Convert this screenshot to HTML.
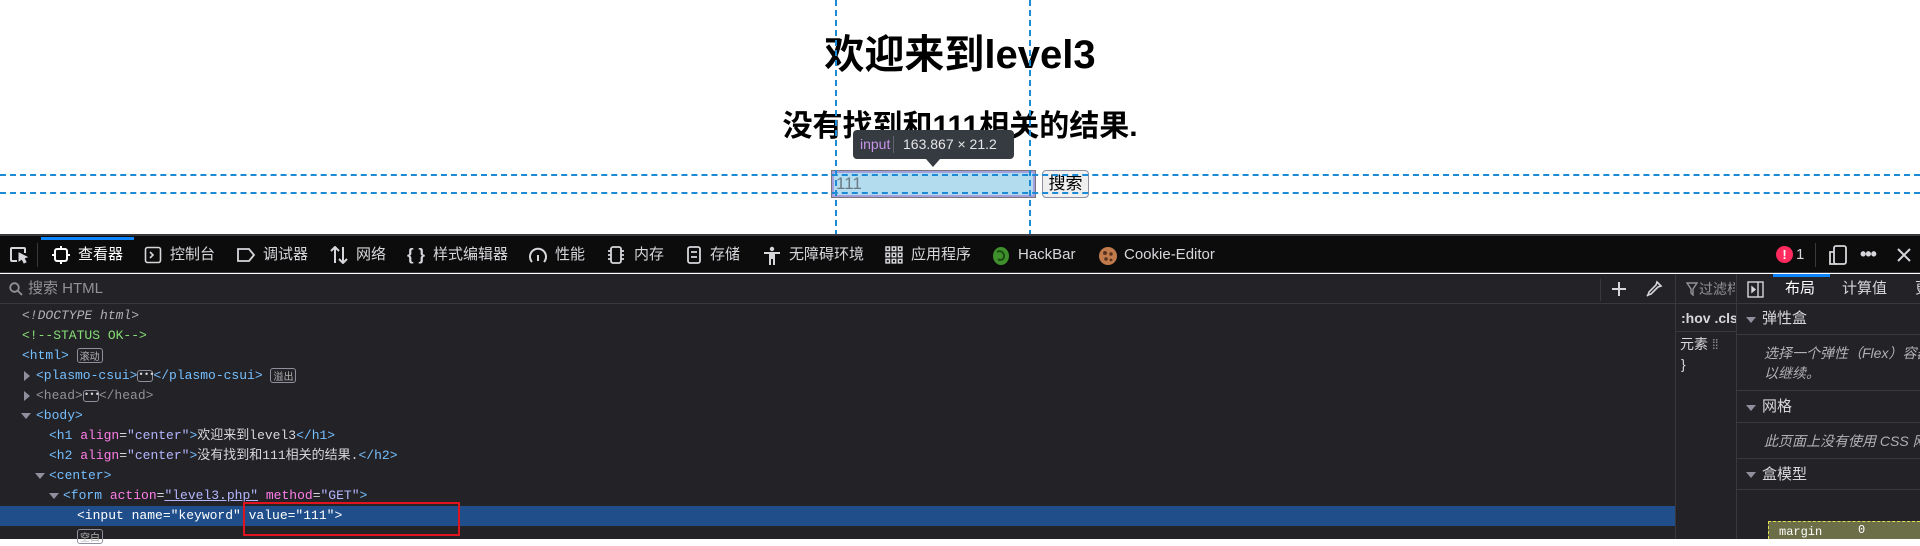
<!DOCTYPE html>
<html><head><meta charset="utf-8"><style>
*{margin:0;padding:0;box-sizing:border-box}
body{width:1920px;height:539px;overflow:hidden;background:#fff;position:relative;font-family:"Liberation Sans","Noto Sans CJK SC",sans-serif}
.a{position:absolute;white-space:nowrap}
.vd{position:absolute;top:0;height:236px;border-left:2px dashed #1d8ad6;width:0}
.hd{position:absolute;left:0;width:1920px;border-top:2px dashed #1d8ad6;height:0}
.tb{position:absolute;top:236px;left:0;width:1920px;height:37px;background:#0c0c0d;border-bottom:1px solid #38383d}
.ti{position:absolute;top:0;height:37px;line-height:37px;color:#d7d7db;font-size:15px;white-space:nowrap;width:200px}
.ti span{white-space:nowrap}
.ti svg{position:absolute;top:10px}
.mono{font-family:"Liberation Mono","Noto Sans CJK SC",monospace;font-size:13px}
.row{position:absolute;height:20px;line-height:20px;color:#75bfff;white-space:nowrap}
.an{color:#ff7de9}.av{color:#b4b6ff}.tx{color:#d7d7db}.g{color:#939395}
.badge{display:inline-block;border:1px solid #8f8f9d;border-radius:3px;color:#b1b1b3;font-size:10px;line-height:13px;padding:0 2px;vertical-align:middle;font-family:"Noto Sans CJK SC",sans-serif}
.dots{display:inline-block;width:16px;height:12px;border:1px solid #8f8f9d;border-radius:3px;vertical-align:middle;color:#d7d7db;font-size:9px;line-height:8px;text-align:center}
.arr{position:absolute;width:0;height:0;border-left:5px solid transparent;border-right:5px solid transparent;border-top:6px solid #8f8f9d}
.arrR{position:absolute;width:0;height:0;border-top:5px solid transparent;border-bottom:5px solid transparent;border-left:6px solid #8f8f9d}
.sec{position:absolute;left:1737px;width:183px;border-bottom:1px solid #38383d;color:#d7d7db;font-size:15px;white-space:nowrap;overflow:hidden}
.sec span{white-space:nowrap}
</style></head><body>
<div class="a" style="left:0;width:1920px;top:30px;height:50px;line-height:50px;text-align:center;font-size:40px;font-weight:bold;color:#000">欢迎来到level3</div>
<div class="a" style="left:0;width:1920px;top:107px;height:40px;line-height:40px;text-align:center;font-size:30px;font-weight:bold;color:#000">没有找到和111相关的结果.</div>
<div class="a" style="left:832px;top:171px;width:203px;height:26px;background:#b4dcef;border:2px solid #a79ee0;box-shadow:0 0 0 1px #777"></div>
<div class="a" style="left:836px;top:173px;font-size:17px;line-height:22px;color:#6b7a84">111</div>
<div class="a" style="left:1042px;top:170px;width:47px;height:28px;background:#efefef;border:1px solid #8f8f9d;border-radius:4px;font-size:17px;line-height:26px;text-align:center;color:#000">搜索</div>
<div class="vd" style="left:835px"></div><div class="vd" style="left:1029px"></div>
<div class="hd" style="top:174px"></div><div class="hd" style="top:192px"></div>
<div class="a" style="left:853px;top:130px;width:161px;height:29px;background:#363a41;border-radius:4px;font-size:14px;line-height:29px;color:#e6e6e6"><span style="position:absolute;left:7px;color:#c792ea">input</span><span style="position:absolute;left:40px;top:6px;height:17px;border-left:1px solid #60646b"></span><span style="position:absolute;left:50px">163.867 × 21.2</span></div>
<div class="a" style="left:926px;top:159px;width:0;height:0;border-left:7px solid transparent;border-right:7px solid transparent;border-top:8px solid #363a41"></div>

<div class="a" style="left:0;top:234px;width:1920px;height:2px;background:#38383d"></div>
<div class="tb">
 <div class="a" style="left:41px;top:1px;width:93px;height:3px;background:#0a84ff"></div>
 <svg class="a" style="left:9px;top:10px" width="20" height="18" viewBox="0 0 20 18" fill="none" stroke="#d7d7db" stroke-width="2"><path d="M8 15H3a1 1 0 0 1-1-1V3a1 1 0 0 1 1-1h12a1 1 0 0 1 1 1v4"/><path d="M10 7l8 4-3 1 2 4-2 1-2-4-3 2z" fill="#d7d7db" stroke-width="1"/></svg>
 <div class="a" style="left:37px;top:7px;height:24px;border-left:1px solid #38383d"></div>
 <div class="ti" style="left:52px"><svg width="18" height="18" viewBox="0 0 18 18" fill="none" stroke="#fff" stroke-width="2"><rect x="3" y="3" width="12" height="12" rx="2"/><path d="M9 0v3M9 15v3M0 9h3M15 9h3"/></svg><span style="position:absolute;left:26px;color:#fff">查看器</span></div>
 <div class="ti" style="left:144px"><svg width="18" height="18" viewBox="0 0 18 18" fill="none" stroke="#d7d7db" stroke-width="1.6"><rect x="1.5" y="1.5" width="15" height="15" rx="2"/><path d="M6 6l3 3-3 3"/></svg><span style="position:absolute;left:26px">控制台</span></div>
 <div class="ti" style="left:236px"><svg width="20" height="18" viewBox="0 0 20 18" fill="none" stroke="#d7d7db" stroke-width="1.8"><path d="M2 3h11l5 6-5 6H2z"/></svg><span style="position:absolute;left:27px">调试器</span></div>
 <div class="ti" style="left:329px"><svg width="20" height="18" viewBox="0 0 20 18" fill="none" stroke="#d7d7db" stroke-width="2"><path d="M6 17V1M2 5l4-4 4 4M14 1v16M10 13l4 4 4-4"/></svg><span style="position:absolute;left:27px">网络</span></div>
 <div class="ti" style="left:407px"><span style="position:absolute;left:0;font-size:17px;font-weight:bold">{ }</span><span style="position:absolute;left:26px">样式编辑器</span></div>
 <div class="ti" style="left:528px"><svg width="20" height="18" viewBox="0 0 20 18" fill="none" stroke="#d7d7db" stroke-width="2"><path d="M4 16A8 8 0 1 1 16 16"/><path d="M10 15V9"/></svg><span style="position:absolute;left:27px">性能</span></div>
 <div class="ti" style="left:606px"><svg width="20" height="18" viewBox="0 0 20 18" fill="none" stroke="#d7d7db" stroke-width="1.8"><rect x="5" y="1" width="10" height="16" rx="2"/><path d="M2 5h3M2 9h3M2 13h3M15 5h3M15 9h3M15 13h3"/></svg><span style="position:absolute;left:28px">内存</span></div>
 <div class="ti" style="left:686px"><svg width="16" height="18" viewBox="0 0 16 18" fill="none" stroke="#d7d7db" stroke-width="1.8"><rect x="2" y="1" width="12" height="16" rx="2"/><path d="M5 6h6M5 11h6"/></svg><span style="position:absolute;left:24px">存储</span></div>
 <div class="ti" style="left:762px"><svg width="20" height="20" viewBox="0 0 20 20" fill="#d7d7db"><circle cx="10" cy="3" r="2.2"/><path d="M2 6h16v2h-5v11h-2v-6H9v6H7V8H2z"/></svg><span style="position:absolute;left:27px">无障碍环境</span></div>
 <div class="ti" style="left:885px"><svg width="18" height="18" viewBox="0 0 18 18" fill="none" stroke="#d7d7db" stroke-width="1.5"><rect x="1" y="1" width="3.5" height="3.5"/><rect x="7.2" y="1" width="3.5" height="3.5"/><rect x="13.4" y="1" width="3.5" height="3.5"/><rect x="1" y="7.2" width="3.5" height="3.5"/><rect x="7.2" y="7.2" width="3.5" height="3.5"/><rect x="13.4" y="7.2" width="3.5" height="3.5"/><rect x="1" y="13.4" width="3.5" height="3.5"/><rect x="7.2" y="13.4" width="3.5" height="3.5"/><rect x="13.4" y="13.4" width="3.5" height="3.5"/></svg><span style="position:absolute;left:26px">应用程序</span></div>
 <div class="ti" style="left:991px"><svg width="20" height="20" viewBox="0 0 20 20"><ellipse cx="10" cy="10" rx="8" ry="9" fill="#3f8f2c"/><path d="M6 6c3-2 7 0 7 4s-4 5-6 3" stroke="#1d4d12" stroke-width="2" fill="none"/></svg><span style="position:absolute;left:27px">HackBar</span></div>
 <div class="ti" style="left:1098px"><svg width="20" height="20" viewBox="0 0 20 20"><circle cx="10" cy="10" r="9" fill="#c07a4c"/><circle cx="7" cy="7" r="2" fill="#5a3320"/><circle cx="13" cy="8" r="1.7" fill="#5a3320"/><circle cx="8" cy="13" r="1.8" fill="#5a3320"/><circle cx="13" cy="14" r="1.4" fill="#5a3320"/></svg><span style="position:absolute;left:26px">Cookie-Editor</span></div>
 <div class="a" style="left:1776px;top:10px;width:17px;height:17px;border-radius:50%;background:#ff2a5e;color:#fff;font-size:13px;font-weight:bold;line-height:17px;text-align:center">!</div>
 <div class="ti" style="left:1796px;width:20px">1</div>
 <div class="a" style="left:1815px;top:7px;height:24px;border-left:1px solid #38383d"></div>
 <svg class="a" style="left:1828px;top:9px" width="20" height="20" viewBox="0 0 20 20" fill="none" stroke="#d7d7db" stroke-width="1.8"><rect x="6" y="1" width="12" height="18" rx="2"/><path d="M6 7H2v12h7"/></svg>
 <div class="ti" style="left:1860px;width:30px;font-size:18px;font-weight:bold;letter-spacing:-1px">•••</div>
 <svg class="a" style="left:1897px;top:12px" width="14" height="14" viewBox="0 0 14 14" stroke="#d7d7db" stroke-width="2"><path d="M1 1l12 12M13 1L1 13"/></svg>
</div>

<div class="a" style="left:0;top:274px;width:1675px;height:265px;background:#232327"></div>
<div class="a" style="left:1675px;top:274px;width:62px;height:265px;background:#232327;border-left:1px solid #38383d;border-right:1px solid #38383d"></div>
<div class="a" style="left:1737px;top:274px;width:183px;height:265px;background:#232327"></div>
<div class="a" style="left:0;top:303px;width:1675px;border-top:1px solid #38383d"></div>
<svg class="a" style="left:9px;top:282px" width="14" height="14" viewBox="0 0 14 14" fill="none" stroke="#939395" stroke-width="1.8"><circle cx="5.5" cy="5.5" r="4.3"/><path d="M8.5 8.5l4.5 4.5"/></svg>
<div class="a" style="left:28px;top:278px;font-size:15px;line-height:22px;color:#939395">搜索 HTML</div>
<div class="a" style="left:1600px;top:279px;height:22px;border-left:1px solid #38383d"></div>
<svg class="a" style="left:1611px;top:281px" width="16" height="16" viewBox="0 0 16 16" stroke="#d7d7db" stroke-width="2"><path d="M8 1v14M1 8h14"/></svg>
<svg class="a" style="left:1645px;top:280px" width="18" height="18" viewBox="0 0 18 18" fill="none" stroke="#d7d7db" stroke-width="1.6"><path d="M12 2l4 4-3 1-7 7-3 1 1-3 7-7z"/><path d="M2 16l2-2"/></svg>

<div class="row mono" style="left:22px;top:306px;color:#b1b1b3;font-style:italic">&lt;!DOCTYPE html&gt;</div>
<div class="row mono" style="left:22px;top:326px;color:#86de74">&lt;!--STATUS OK--&gt;</div>
<div class="row mono" style="left:22px;top:346px">&lt;html&gt; <span class="badge">滚动</span></div>
<div class="arrR" style="left:24px;top:371px"></div>
<div class="row mono" style="left:36px;top:366px">&lt;plasmo-csui&gt;<span class="dots">•••</span>&lt;/plasmo-csui&gt; <span class="badge">溢出</span></div>
<div class="arrR" style="left:24px;top:391px"></div>
<div class="row mono g" style="left:36px;top:386px">&lt;head&gt;<span class="dots">•••</span>&lt;/head&gt;</div>
<div class="arr" style="left:21px;top:413px"></div>
<div class="row mono" style="left:36px;top:406px">&lt;body&gt;</div>
<div class="row mono" style="left:49px;top:426px">&lt;h1 <span class="an">align</span><span class="tx">=</span><span class="av">"center"</span>&gt;<span class="tx">欢迎来到level3</span>&lt;/h1&gt;</div>
<div class="row mono" style="left:49px;top:446px">&lt;h2 <span class="an">align</span><span class="tx">=</span><span class="av">"center"</span>&gt;<span class="tx">没有找到和111相关的结果.</span>&lt;/h2&gt;</div>
<div class="arr" style="left:35px;top:473px"></div>
<div class="row mono" style="left:49px;top:466px">&lt;center&gt;</div>
<div class="arr" style="left:49px;top:493px"></div>
<div class="row mono" style="left:63px;top:486px">&lt;form <span class="an">action</span><span class="tx">=</span><span class="av" style="text-decoration:underline">"level3.php"</span> <span class="an">method</span><span class="tx">=</span><span class="av">"GET"</span>&gt;</div>
<div class="a" style="left:0;top:506px;width:1675px;height:20px;background:#204e8a"></div>
<div class="row mono" style="left:77px;top:506px;color:#fff">&lt;input name="keyword" value="111"&gt;</div>
<div class="a" style="left:243px;top:502px;width:217px;height:34px;border:2px solid #e0141e"></div>
<div class="a" style="left:77px;top:528px"><span class="badge">空白</span></div>

<svg class="a" style="left:1686px;top:282px" width="12" height="14" viewBox="0 0 12 14" fill="none" stroke="#939395" stroke-width="1.4"><path d="M1 1h10L7 7v6L5 11V7z"/></svg>
<div class="a" style="left:1699px;top:278px;width:36px;overflow:hidden;font-size:14px;line-height:22px;color:#939395">过滤样式</div>
<div class="a" style="left:1676px;top:303px;width:60px;border-top:1px solid #38383d"></div>
<div class="a" style="left:1681px;top:308px;width:55px;overflow:hidden;font-size:14px;font-weight:bold;line-height:20px;color:#d7d7db">:hov .cls</div>
<div class="a" style="left:1676px;top:331px;width:60px;border-top:1px solid #38383d"></div>
<div class="a" style="left:1680px;top:334px;font-size:14px;line-height:20px;color:#d7d7db">元素 <span style="color:#939395;letter-spacing:-1px">⁞⁞</span></div>
<div class="a" style="left:1681px;top:354px;font-size:14px;line-height:20px;color:#d7d7db">}</div>

<div class="a" style="left:1737px;top:274px;width:183px;height:30px;border-bottom:1px solid #38383d;background:#232327"></div>
<svg class="a" style="left:1747px;top:281px" width="17" height="17" viewBox="0 0 17 17" fill="none" stroke="#d7d7db" stroke-width="1.4"><rect x="1" y="1" width="15" height="15"/><path d="M11 1v15"/><path d="M5 6l3 2.5-3 2.5z" fill="#d7d7db"/></svg>
<div class="a" style="left:1773px;top:274px;width:57px;height:3px;background:#0a84ff"></div>
<div class="a" style="left:1785px;top:278px;font-size:15px;line-height:22px;color:#fff">布局</div>
<div class="a" style="left:1842px;top:278px;font-size:15px;line-height:22px;color:#d7d7db">计算值</div>
<div class="a" style="left:1915px;top:278px;font-size:15px;line-height:22px;color:#d7d7db">更</div>
<div class="sec" style="top:304px;height:31px;line-height:30px"><div class="arr" style="left:9px;top:13px"></div><span style="position:absolute;left:25px">弹性盒</span></div>
<div class="sec" style="top:335px;height:56px;font-style:italic;color:#b1b1b3;font-size:14px;line-height:20px"><span style="position:absolute;left:27px;top:8px">选择一个弹性（Flex）容器</span><span style="position:absolute;left:27px;top:28px">以继续。</span></div>
<div class="sec" style="top:391px;height:32px;line-height:32px"><div class="arr" style="left:9px;top:14px"></div><span style="position:absolute;left:25px">网格</span></div>
<div class="sec" style="top:423px;height:36px;font-style:italic;color:#b1b1b3;font-size:14px;line-height:36px"><span style="position:absolute;left:27px">此页面上没有使用 CSS 网格</span></div>
<div class="sec" style="top:459px;height:31px;line-height:31px"><div class="arr" style="left:9px;top:13px"></div><span style="position:absolute;left:25px">盒模型</span></div>
<div class="a" style="left:1768px;top:521px;width:152px;height:18px;background:#6b6e47;border:1px dashed #e0e050;border-right:none;border-bottom:none"></div>
<div class="a mono" style="left:1779px;top:524px;font-size:12px;line-height:16px;color:#fff">margin</div>
<div class="a mono" style="left:1858px;top:522px;font-size:12px;line-height:16px;color:#fff">0</div>
</body></html>
